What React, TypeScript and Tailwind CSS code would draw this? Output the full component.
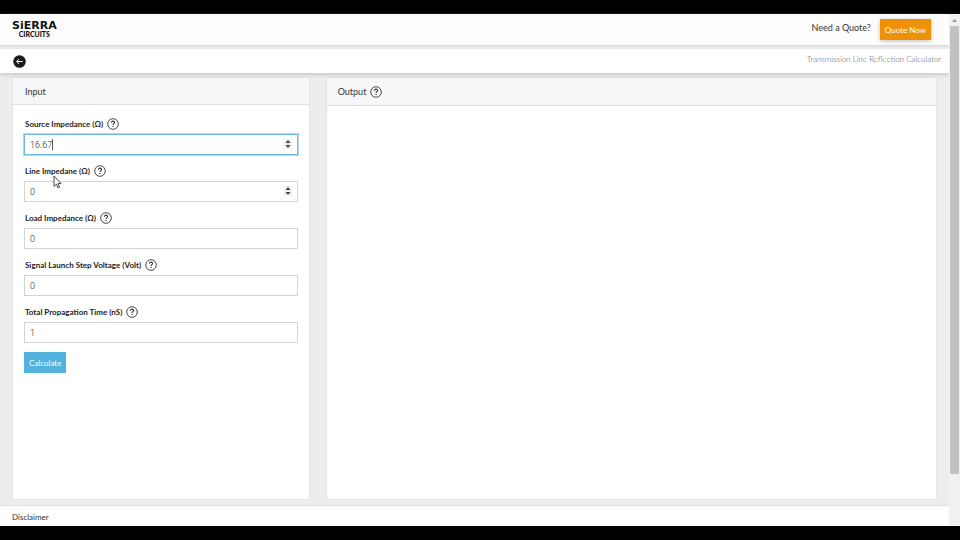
import { useState } from 'react'
import clsx from 'clsx'

type Field = {
  id: string
  label: string
  initial: string
  stepper?: boolean
  active?: boolean
}

const fields: Field[] = [
  { id: 'source', label: 'Source Impedance (Ω)', initial: '16.67', stepper: true, active: true },
  { id: 'line', label: 'Line Impedane (Ω)', initial: '0', stepper: true },
  { id: 'load', label: 'Load Impedance (Ω)', initial: '0' },
  { id: 'voltage', label: 'Signal Launch Step Voltage (Volt)', initial: '0' },
  { id: 'time', label: 'Total Propagation Time (nS)', initial: '1' },
]

function HelpButton({ topic }: { topic: string }) {
  return (
    <button type="button" aria-label={`Help: ${topic}`} className="shrink-0 text-[#333]">
      <svg viewBox="0 0 12 12" className="size-3" fill="none" stroke="currentColor">
        <circle cx="6" cy="6" r="5.3" strokeWidth="0.9" />
        <path d="M4.4 4.7C4.4 3.7 5.1 3.1 6 3.1s1.6.6 1.6 1.4c0 1.2-1.5 1.2-1.5 2.5" strokeWidth="1.1" />
        <path d="M6.1 8v1.1" strokeWidth="1.2" />
      </svg>
    </button>
  )
}

function NumberField({ field }: { field: Field }) {
  const [value, setValue] = useState(field.initial)
  return (
    <div>
      <div className="flex h-4 items-center gap-1 pl-px">
        <label htmlFor={field.id} className="text-[8px] font-bold text-[#222]">
          {field.label}
        </label>
        <HelpButton topic={field.label} />
      </div>
      <div className="relative mt-[2px]">
        <input
          id={field.id}
          type="number"
          value={value}
          onChange={(e) => setValue(e.target.value)}
          className={clsx(
            'block h-[21px] w-full appearance-none border bg-white px-[5px] font-[family-name:Roboto,sans-serif] text-[9px] font-light text-[#222] outline-none [appearance:textfield] [&::-webkit-inner-spin-button]:appearance-none',
            field.active ? 'border-[#6cbbe0] ring-1 ring-[#a9d9ee]' : 'border-[#d4d4d4]',
          )}
        />
        {/* text caret of the field being edited */}
        {field.active && <span className="absolute top-[5px] left-7 h-[11px] w-px bg-[#555]" />}
        {field.stepper && (
          <svg viewBox="0 0 8 10" className="absolute top-[5px] right-[6px] h-[10px] w-2 bg-[#f3f3f3]" fill="#444">
            <path d="M1.4 3.9 4 1l2.6 2.9zM1.4 6.1 4 9l2.6-2.9z" />
          </svg>
        )}
      </div>
    </div>
  )
}

function Header() {
  return (
    <header className="flex h-[31px] items-start justify-between bg-[#fdfdfd] pr-[18px] pl-3 shadow-[0_1px_2px_#d0d0d0]">
      <a href="#home" className="mt-2 flex flex-col items-center gap-px text-[#111]">
        <span className="font-[family-name:'DejaVu_Sans',sans-serif] text-[11px] leading-[8px] font-bold">SiERRA</span>
        <span className="text-[7px] leading-[7px] font-black">CIRCUITS</span>
      </a>
      <div className="flex items-start gap-[9px]">
        <span className="mt-2 text-[9px] leading-3 text-[#333]">Need a Quote?</span>
        <button
          type="button"
          className="mt-[5px] h-[21px] bg-[#ef9106] px-[5px] text-[8px] text-white shadow-[0_1px_4px_#bbb]"
        >
          Quote Now
        </button>
      </div>
    </header>
  )
}

function SubHeader() {
  return (
    <div className="mt-1 flex h-6 items-center justify-between bg-white pr-2 pl-[13px] shadow-[0_2px_4px_#c8c8c8]">
      <a href="#back" aria-label="Back">
        <svg viewBox="0 0 13 13" className="size-[13px]" fill="none">
          <circle cx="6.5" cy="6.5" r="6.3" fill="#1b1b1b" />
          <path d="M9.6 6.5H3.8M6 4.2 3.7 6.5 6 8.8" stroke="#fff" />
        </svg>
      </a>
      <h1 className="mb-1 text-[8px] font-light text-[#555]">Transmission Line Reflection Calculator</h1>
    </div>
  )
}

function Scrollbar() {
  return (
    <div className="flex w-[11px] shrink-0 flex-col bg-[#f1f1f1]">
      <svg viewBox="0 0 11 12" className="h-3 w-full shrink-0" fill="#999">
        <path d="M3 8 5.5 5 8 8z" />
      </svg>
      <div className="mx-px h-7/8 bg-[#c1c1c1]" />
    </div>
  )
}

export default function App() {
  return (
    <div className="relative flex h-screen flex-col bg-black py-[14px] font-[family-name:Lato,sans-serif]">
      <div className="flex min-h-0 flex-1">
        <div className="flex min-w-0 flex-1 flex-col bg-[#ededed]">
          <Header />
          <SubHeader />

          <main className="mt-[5px] mr-[13px] mb-[6px] ml-[13px] grid flex-1 grid-cols-[33fr_68fr] gap-[18px]">
            <section className="bg-white shadow-[0_0_2px_#d4d4d4]">
              <h2 className="flex h-[27px] items-center border-b border-[#e0e0e0] bg-[#f7f7f7] px-3 pt-px text-[9px] text-[#333]">
                Input
              </h2>
              <form
                onSubmit={(e) => e.preventDefault()}
                className="flex flex-col items-stretch gap-2 px-[11px] pt-[11px]"
              >
                {fields.map((field) => (
                  <NumberField key={field.id} field={field} />
                ))}
                <button
                  type="submit"
                  className="mt-px h-[21px] self-start bg-[#51b2dd] px-[5px] text-[8px] text-white"
                >
                  Calculate
                </button>
              </form>
            </section>

            <section className="bg-white shadow-[0_0_2px_#d4d4d4]">
              <div className="flex h-[28px] items-center gap-1 border-b border-[#e0e0e0] bg-[#f7f7f7] px-[11px]">
                <h2 className="text-[9px] text-[#333]">Output</h2>
                <HelpButton topic="Output" />
              </div>
            </section>
          </main>

          <footer className="flex h-[21px] items-center border-t border-[#e2e2e2] bg-white px-3 pt-[2px]">
            <a href="#disclaimer" className="text-[8px] text-[#333]">
              Disclaimer
            </a>
          </footer>
        </div>
        <Scrollbar />
      </div>

      {/* mouse pointer */}
      <svg viewBox="0 0 9 14" className="absolute top-[175px] left-[53px] h-[14px] w-[9px]" fill="#fff" stroke="#333" strokeWidth="0.9">
        <path d="M1 1v10.4l2.4-2.2 1.7 3.8 1.5-.7-1.7-3.7h3.2z" />
      </svg>
    </div>
  )
}
